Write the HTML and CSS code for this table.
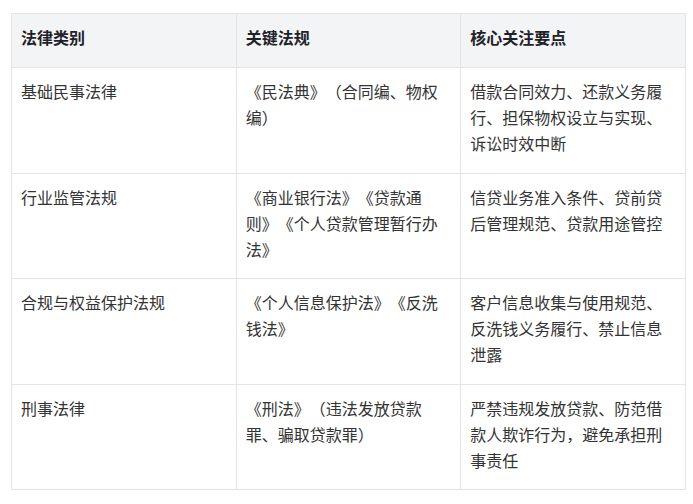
FILE: index.html
```html
<!DOCTYPE html>
<html lang="zh-CN">
<head>
<meta charset="utf-8">
<link rel="stylesheet" href="styles.css">
</head>
<body>
<div class="wrap">
<table class="law-table">
<thead>
<tr><th>法律类别</th><th>关键法规</th><th>核心关注要点</th></tr>
</thead>
<tbody>
<tr><td>基础民事法律</td><td>《民法典》（合同编、物权编）</td><td>借款合同效力、还款义务履行、担保物权设立与实现、诉讼时效中断</td></tr>
<tr><td>行业监管法规</td><td>《商业银行法》《贷款通则》《个人贷款管理暂行办法》</td><td>信贷业务准入条件、贷前贷后管理规范、贷款用途管控</td></tr>
<tr><td>合规与权益保护法规</td><td>《个人信息保护法》《反洗钱法》</td><td>客户信息收集与使用规范、反洗钱义务履行、禁止信息泄露</td></tr>
<tr><td>刑事法律</td><td>《刑法》（违法发放贷款罪、骗取贷款罪）</td><td>严禁违规发放贷款、防范借款人欺诈行为，避免承担刑事责任</td></tr>
</tbody>
</table>
</div>
</body>
</html>
```

FILE: styles.css
```css
html, body {
  margin: 0;
  padding: 0;
  background: #ffffff;
}
.wrap {
  padding: 13px 7px 0 11px;
}
.law-table {
  width: 100%;
  border-collapse: collapse;
  table-layout: fixed;
  font-family: "Noto Sans CJK SC", "Noto Sans", sans-serif;
  font-size: 16px;
  line-height: 26px;
  color: #333333;
  text-spacing-trim: space-all;
  font-feature-settings: "fwid" 1;
}
.law-table th,
.law-table td {
  border: 1px solid #e2e4e8;
  padding: 10px 10px 16.5px 9px;
  text-align: left;
  vertical-align: top;
}
.law-table th {
  background: #f3f4f6;
  font-weight: 700;
  color: #1f2329;
  padding-bottom: 17px;
}
```
